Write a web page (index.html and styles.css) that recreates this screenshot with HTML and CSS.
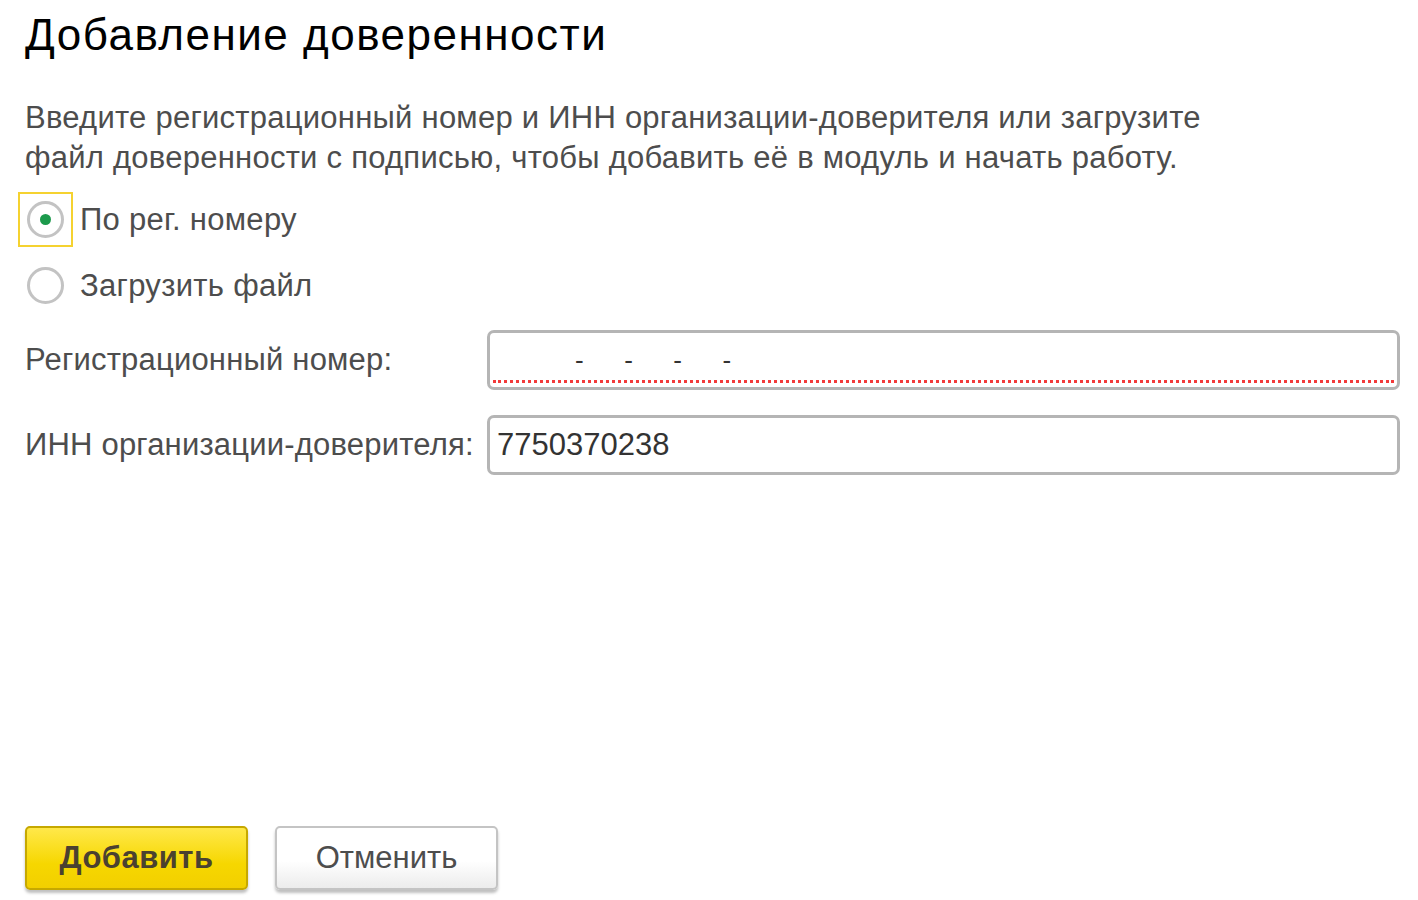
FILE: index.html
```html
<!DOCTYPE html>
<html lang="ru">
<head>
<meta charset="utf-8">
<title>Добавление доверенности</title>
<link rel="stylesheet" href="styles.css">
</head>
<body>
<div class="form">
  <h1 class="title">Добавление доверенности</h1>
  <p class="intro">Введите регистрационный номер и ИНН организации-доверителя или загрузите<br>файл доверенности с подписью, чтобы добавить её в модуль и начать работу.</p>
  <div class="radios">
    <div class="radio-row">
      <span class="focus"><span class="radio checked"></span></span>
      <span class="radio-label">По рег. номеру</span>
    </div>
    <div class="radio-row">
      <span class="focus nofocus"><span class="radio"></span></span>
      <span class="radio-label">Загрузить файл</span>
    </div>
  </div>
  <div class="fields">
    <div class="field-row">
      <span class="field-label">Регистрационный номер:</span>
      <div class="input required">
        <span class="mask"><span>-</span><span>-</span><span>-</span><span>-</span></span>
      </div>
    </div>
    <div class="field-row">
      <span class="field-label">ИНН организации-доверителя:</span>
      <div class="input"><span class="value">7750370238</span></div>
    </div>
  </div>
  <div class="spacer"></div>
  <div class="buttons">
    <button class="btn btn-primary">Добавить</button>
    <button class="btn btn-default">Отменить</button>
  </div>
</div>
</body>
</html>
```

FILE: styles.css
```css
html, body {
  margin: 0;
  padding: 0;
  background: #fff;
}
body {
  font-family: "Liberation Sans", Arial, sans-serif;
  color: #4d4d4d;
}
.form {
  width: 1418px;
  height: 900px;
  box-sizing: border-box;
  padding: 8px 18px 10px 25px;
  display: flex;
  flex-direction: column;
}
.title {
  margin: 0;
  font-size: 44px;
  letter-spacing: 1.5px;
  font-weight: normal;
  color: #000;
  line-height: 54px;
}
.intro {
  margin: 36px 0 0 0;
  font-size: 31px;
  letter-spacing: 0.25px;
  line-height: 40px;
}
.radios {
  margin-top: 14px;
  display: flex;
  flex-direction: column;
  gap: 11px;
  margin-left: -7px;
}
.radio-row {
  display: flex;
  align-items: center;
  height: 55px;
}
.focus {
  width: 55px;
  height: 55px;
  box-sizing: border-box;
  border: 2px solid #f5d230;
  display: flex;
  align-items: center;
  justify-content: center;
}
.focus.nofocus {
  border-color: transparent;
}
.radio {
  width: 37px;
  height: 37px;
  box-sizing: border-box;
  border: 3px solid #c3c3c3;
  border-radius: 50%;
  background: #fff;
  display: flex;
  align-items: center;
  justify-content: center;
}
.radio.checked::after {
  content: "";
  width: 11px;
  height: 11px;
  border-radius: 50%;
  background: #1c9a4c;
}
.radio-label {
  margin-left: 7px;
  font-size: 31px;
  letter-spacing: 0.3px;
}
.fields {
  margin-top: 17px;
  display: flex;
  flex-direction: column;
  gap: 25px;
}
.field-row {
  display: flex;
  align-items: center;
}
.field-label {
  width: 462px;
  font-size: 31px;
  letter-spacing: 0.2px;
  white-space: nowrap;
}
.input {
  flex: 1;
  height: 60px;
  box-sizing: border-box;
  border: 3px solid #b5b5b5;
  border-radius: 7px;
  background: #fff;
  display: flex;
  align-items: center;
  padding: 0 7px;
  font-size: 31px;
  color: #333;
  position: relative;
}
.input.required::after {
  content: "";
  position: absolute;
  left: 3px;
  right: 3px;
  bottom: 4px;
  border-bottom: 3px dotted #f23a3a;
}
.mask {
  display: flex;
  margin-left: 78px;
  gap: 40.5px;
  font-size: 26px;
  color: #333;
}
.spacer {
  flex: 1;
}
.buttons {
  display: flex;
  gap: 27px;
}
.btn {
  width: 223px;
  height: 64px;
  font-family: "Liberation Sans", Arial, sans-serif;
  font-size: 31px;
  border-radius: 5px;
  cursor: pointer;
}
.btn-primary {
  background: linear-gradient(#ffe84a, #f6d700 60%, #f2cf00);
  border: 2px solid #c6a800;
  font-weight: bold;
  letter-spacing: 0.5px;
  color: #4a4130;
  box-shadow: 0 3px 3px rgba(0,0,0,0.25);
}
.btn-default {
  background: linear-gradient(#ffffff, #ffffff 55%, #ececec);
  border: 2px solid #c4c4c4;
  color: #4d4d4d;
  box-shadow: 0 3px 3px rgba(0,0,0,0.25);
}
```
